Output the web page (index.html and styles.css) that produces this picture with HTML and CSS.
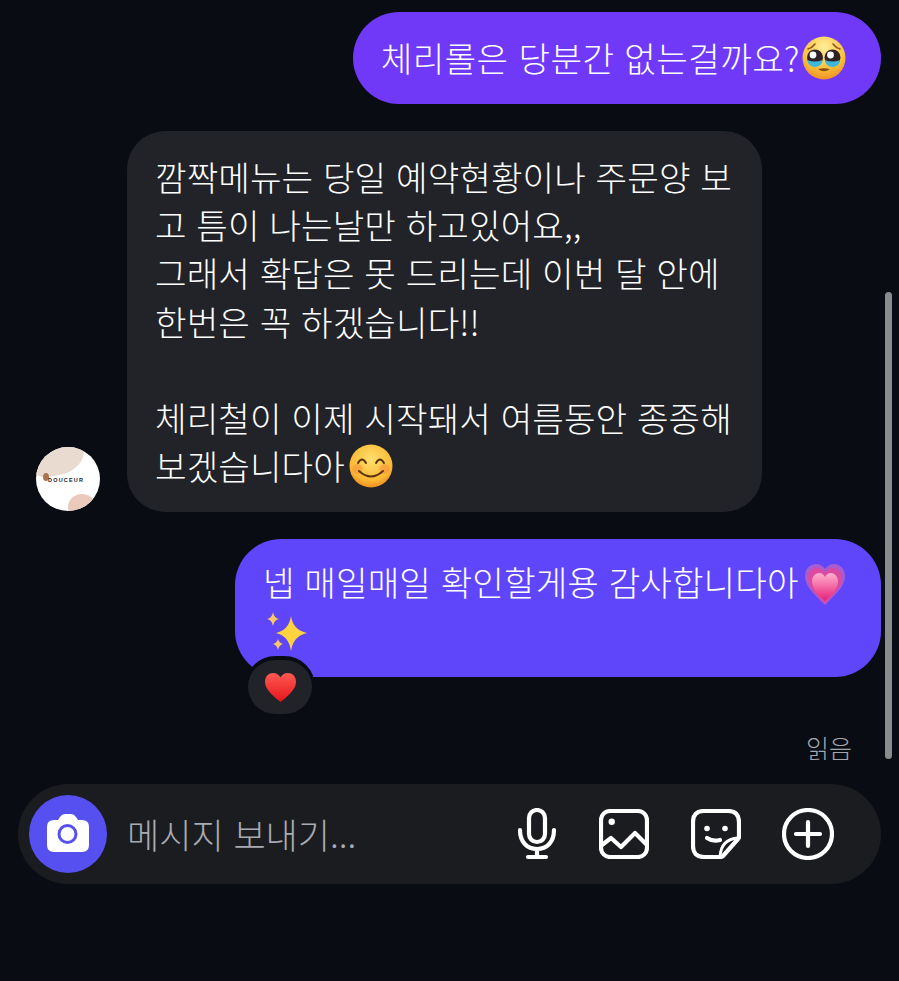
FILE: index.html
```html
<!DOCTYPE html>
<html lang="ko">
<head>
  <meta charset="UTF-8">
  <title>메시지</title>
  <meta name="viewport" content="width=device-width, initial-scale=1.0">
  <link rel="stylesheet" href="styles.css">
</head>
<body>
  <div class="scrollbar"></div>
  <main class="chat">
    <div class="row row-me">
      <div class="bubble bubble-me bubble-first">체리롤은 당분간 없는걸까요?<svg class="emoji emoji-tight" viewBox="0 0 44 44"><defs><radialGradient id="face1" cx="50%" cy="25%" r="75%"><stop offset="0" stop-color="#ffee9a"/><stop offset=".65" stop-color="#fbc13c"/><stop offset="1" stop-color="#ee9222"/></radialGradient></defs><circle cx="22" cy="22" r="21.500" fill="url(#face1)"/><path d="M6 13q4-1 7-5M38 13q-4-1-7-5" fill="none" stroke="#8a5a24" stroke-width="1.600" stroke-linecap="round"/><circle cx="13" cy="21.500" r="8" fill="#2e2226"/><circle cx="30.500" cy="21.500" r="8" fill="#2e2226"/><path d="M5.500 24a7.500 7 0 0 0 15 0q-7.500 3-15 0zM23 24a7.500 7 0 0 0 15 0q-7.500 3-15 0z" fill="#3cb8dc"/><circle cx="11" cy="19" r="3.400" fill="#fff"/><circle cx="28.500" cy="19" r="3.400" fill="#fff"/><path d="M16 33q6 4.500 12 0q-6-1.500-12 0z" fill="#8a4a18"/></svg></div>
    </div>

    <div class="row row-them">
      <div class="avatar">
        <div class="avatar-blob-top"></div>
        <div class="avatar-blob-bottom"></div>
        <div class="avatar-dot"></div>
        <span class="avatar-name">DOUCEUR</span>
      </div>
      <div class="bubble bubble-them">깜짝메뉴는 당일 예약현황이나 주문양 보<br>고 틈이 나는날만 하고있어요,,<br>그래서 확답은 못 드리는데 이번 달 안에<br>한번은 꼭 하겠습니다!!<br><br>체리철이 이제 시작돼서 여름동안 종종해<br>보겠습니다아<svg class="emoji" viewBox="0 0 44 44"><defs><radialGradient id="face2" cx="50%" cy="35%" r="65%"><stop offset="0" stop-color="#ffdf6e"/><stop offset=".75" stop-color="#fbb934"/><stop offset="1" stop-color="#ef8f22"/></radialGradient></defs><circle cx="22" cy="22" r="21.500" fill="url(#face2)"/><circle cx="8.500" cy="25" r="5" fill="#f58a3c" opacity=".5"/><circle cx="35.500" cy="25" r="5" fill="#f58a3c" opacity=".5"/><path d="M9 19q4-7 8 0M27 19q4-7 8 0" fill="none" stroke="#5c3410" stroke-width="2" stroke-linecap="round"/><path d="M10 27q12 11 24 0" fill="none" stroke="#5c3410" stroke-width="2" stroke-linecap="round"/></svg></div>
    </div>

    <div class="row row-me">
      <div class="bubble-wrap">
        <div class="bubble bubble-me bubble-last">넵 매일매일 확인할게용 감사합니다아<svg class="emoji emoji-heart" viewBox="0 0 44 44"><defs><linearGradient id="heartMid" x1="0" y1="0" x2="0" y2="1"><stop offset="0" stop-color="#ffb0cf"/><stop offset="1" stop-color="#e81e78"/></linearGradient></defs><path d="M22 43C10 31 2 24 2 14 2 6 8 2 13 2c4 0 7 2 9 5 2-3 5-5 9-5 5 0 11 4 11 12 0 10-8 17-20 29z" fill="#a85cd0"/><path d="M22 42C12 31 5 25 5 16 5 9 10 6 14 6c4 0 6 2 8 5 2-3 4-5 8-5 4 0 9 3 9 10 0 9-7 15-17 26z" fill="#dc4aa0"/><path d="M22 39C14 31 9 26 9 19c0-5 4-8 7-8 3 0 5 2 6 4 1-2 3-4 6-4 3 0 7 3 7 8 0 7-5 12-13 20z" fill="url(#heartMid)"/></svg><br><svg class="emoji emoji-sparkles" viewBox="0 0 44 44"><path d="M26 5q2 14 16 17q-14 3-16 18q-2-15-15-18q13-3 15-17z" fill="#fdd33f"/><path d="M8 1q1 6 6 7q-5 1-6 7q-1-6-6-7q5-1 6-7z" fill="#fbc964"/><path d="M13 28q1 4 5 5q-4 1-5 6q-1-5-5-6q4-1 5-5z" fill="#fbc964"/></svg></div>
        <div class="reaction"><svg class="reaction-heart" viewBox="0 0 34 32"><defs><linearGradient id="heartRed" x1="0" y1="0" x2="0" y2="1"><stop offset="0" stop-color="#ff5a52"/><stop offset="1" stop-color="#e5141a"/></linearGradient></defs><path d="M17 31C7 23 1 17 1 10 1 4.500 5 1 9.500 1 13 1 15.500 3 17 5.500 18.500 3 21 1 24.500 1 29 1 33 4.500 33 10c0 7-6 13-16 21z" fill="url(#heartRed)"/></svg></div>
      </div>
    </div>

    <div class="read">읽음</div>

    <div class="composer">
      <button class="camera" aria-label="카메라">
        <svg class="camera-icon" viewBox="0 0 44 40" width="44" height="40"><path d="M12 7l2-3q2-3 5-3h6q3 0 5 3l2 3h4q7 0 7 7v18q0 7-7 7H8q-7 0-7-7V14q0-7 7-7z" fill="#fff"/><circle cx="21.500" cy="21" r="8.500" fill="none" stroke="#5650f0" stroke-width="3"/></svg>
      </button>
      <span class="placeholder">메시지 보내기...</span>
      <div class="tools">
        <svg class="tool tool-mic" viewBox="0 0 40 52"><rect x="12" y="2" width="16" height="32" rx="8"/><path d="M3 22c0 12 7 19 17 19s17-7 17-19M20 41v8M11 49h18"/></svg>
        <svg class="tool tool-image" viewBox="0 0 50 50"><rect x="2" y="2" width="46" height="46" rx="9"/><circle cx="12.700" cy="12.700" r="3.200" class="fill"/><path d="M3 36l9-7 10 9 14-14 11 11"/></svg>
        <svg class="tool" viewBox="0 0 50 50"><path d="M29 48H13Q2 48 2 37V13Q2 2 13 2h24q11 0 11 11v15q0 1-1 2L32 47q-1 1-3 1z"/><path class="thin" d="M47 29q-17 1-18 19"/><circle cx="16" cy="19.500" r="2.800" class="fill"/><circle cx="34" cy="19.500" r="2.800" class="fill"/><path d="M16 29q6 4 13 2"/></svg>
        <svg class="tool tool-plus" viewBox="0 0 52 52"><circle cx="26" cy="26" r="24"/><path d="M26 14v24M14 26h24"/></svg>
      </div>
    </div>
  </main>
</body>
</html>
```

FILE: styles.css
```css
html, body {
  height: 100%;
}
body {
  margin: 0;
  background: #0a0c13;
  font-family: "Noto Sans CJK KR", "Noto Sans", sans-serif;
  overflow: hidden;
  position: relative;
}
.chat {
  display: flex;
  flex-direction: column;
  padding: 12px 18px 0 18px;
}
.row {
  display: flex;
  align-items: flex-end;
}
.row-me {
  justify-content: flex-end;
  margin-bottom: 27px;
}
.row-them {
  margin-left: 18px;
  gap: 27px;
  margin-bottom: 27px;
}
.bubble {
  color: #fff;
  font-size: 34.300px;
  font-weight: 300;
  line-height: 48.200px;
  letter-spacing: 0.1px;
  white-space: nowrap;
}
.bubble-me {
  background: #5f46fb;
}
.bubble-first {
  background: #7039f7;
  height: 92px;
  box-sizing: border-box;
  padding: 21px 35px 0 28px;
  border-radius: 46px;
  letter-spacing: 0.4px;
}
.bubble-them {
  background: #212329;
  width: 635px;
  height: 381px;
  box-sizing: border-box;
  padding: 21px 28px;
  border-radius: 38px;
}
.bubble-wrap {
  position: relative;
}
.bubble-last {
  width: 646px;
  height: 138px;
  box-sizing: border-box;
  padding: 18px 28px;
  border-radius: 46px;
}
.emoji {
  width: 44px;
  height: 44px;
  vertical-align: -7.500px;
  margin-left: 4px;
}
.emoji-tight {
  margin-left: 2px;
}
.emoji-heart {
  vertical-align: -9.500px;
}
.emoji-sparkles {
  margin-left: 2px;
  vertical-align: -10px;
}
.reaction {
  position: absolute;
  left: 10px;
  top: 117px;
  width: 70px;
  height: 61px;
  box-sizing: border-box;
  background: #212329;
  border: 3px solid #0a0c13;
  border-top-width: 4px;
  border-radius: 35px;
  display: flex;
  align-items: center;
  justify-content: center;
}
.reaction-heart {
  width: 33px;
  height: 31px;
}
.read {
  align-self: flex-end;
  color: #a3a6ac;
  font-size: 25px;
  font-weight: 300;
  line-height: 36px;
  margin: 25px 29px 19px 0;
}
.composer {
  display: flex;
  align-items: center;
  height: 100px;
  background: #1b1c1f;
  border-radius: 50px;
  padding: 0 47px 0 11px;
}
.camera {
  width: 78px;
  height: 78px;
  flex: none;
  padding: 0;
  border: none;
  border-radius: 50%;
  background: #5650f0;
  display: flex;
  align-items: center;
  justify-content: center;
}
.camera-icon {
  margin-bottom: 2px;
}
.placeholder {
  margin-left: 20px;
  padding-bottom: 2px;
  color: #a8abb1;
  font-size: 35px;
  font-weight: 300;
  white-space: nowrap;
}
.tools {
  margin-left: auto;
  display: flex;
  align-items: center;
  gap: 41px;
}
.tool {
  width: 50px;
  height: 50px;
  fill: none;
  stroke: #fff;
  stroke-width: 4.200px;
  stroke-linecap: round;
  stroke-linejoin: round;
}
.tool .fill {
  fill: #fff;
  stroke: none;
}
.tool .thin {
  stroke-width: 3px;
}
.tool-mic {
  width: 40px;
  height: 52px;
  margin-right: 1px;
}
.tool-image {
  margin-right: 1px;
}
.tool-plus {
  width: 52px;
  height: 52px;
}
.scrollbar {
  position: absolute;
  left: 885px;
  top: 292px;
  width: 7px;
  height: 467px;
  background: #8a8b8e;
  border-radius: 4px;
}
.avatar {
  position: relative;
  width: 64px;
  height: 64px;
  margin-bottom: 1px;
  border-radius: 50%;
  background: #fff;
  overflow: hidden;
  flex: none;
}
.avatar-blob-top {
  position: absolute;
  left: -6px;
  top: -12px;
  width: 54px;
  height: 40px;
  background: #eadbd0;
  border-radius: 0 0 50% 30%;
  transform: rotate(-12deg);
}
.avatar-blob-bottom {
  position: absolute;
  left: 32px;
  top: 47px;
  width: 28px;
  height: 26px;
  background: #eccabb;
  border-radius: 50%;
}
.avatar-dot {
  position: absolute;
  left: 7px;
  top: 26px;
  width: 6px;
  height: 8px;
  background: #a9754f;
  border-radius: 50%;
}
.avatar-name {
  position: absolute;
  left: 12px;
  top: 30px;
  font-family: "Liberation Sans", sans-serif;
  font-size: 5.500px;
  line-height: 7px;
  font-weight: 700;
  letter-spacing: 1.200px;
  color: #222;
}
```
